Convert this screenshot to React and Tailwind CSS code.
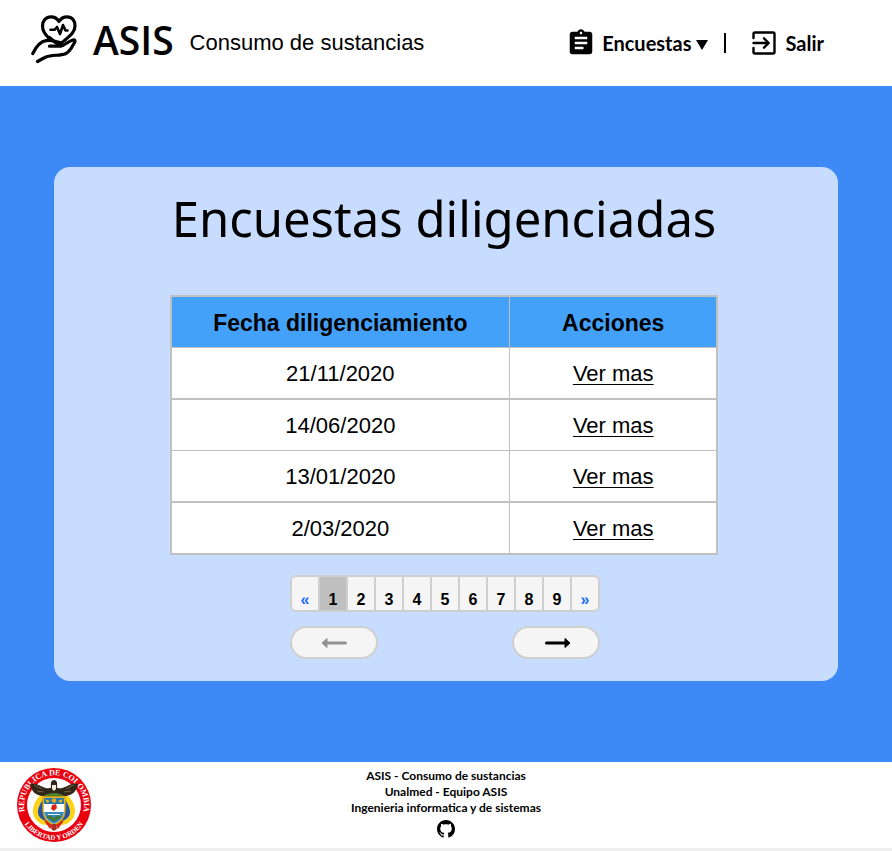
import React from "react";
import { MdAssignment } from "react-icons/md";

const surveys = ["21/11/2020", "14/06/2020", "13/01/2020", "2/03/2020"];
const pages = ["«", "1", "2", "3", "4", "5", "6", "7", "8", "9", "»"];

function HandHeartLogo() {
  return (
    <svg viewBox="0 0 46 50" className="h-[50px] w-[46px] shrink-0" fill="none" stroke="#000" strokeWidth="3.200" strokeLinecap="round" strokeLinejoin="round" aria-hidden="true">
      <path d="M18.5 24 C14 19 11.500 16 11.500 11 C11.500 5.500 15 1.800 20 1.800 C24 1.800 26.500 4 28 6.500 C29.500 4 32 1.800 36 1.800 C41 1.800 44 5.500 44 11 C44 18 38 21.500 31 27.500" />
      <path d="M18.500 22.500 L28 30.500" />
      <path d="M19.500 14.800 H23.500 L26 12 L29 19 L32 10 L34.500 15.500 H36.500" strokeWidth="2.600" />
      <path d="M1.800 38.500 C5 32 9 26.500 15 25.700 C20 25 25 26.300 29 27.500 C31 28.500 29.500 31.200 27.500 31.200 H18.500" />
      <path d="M29.500 31.200 C34 30.500 37 26 42 25 C44 24.700 44.500 26 43.500 27.500 C41 32 39 37 34.500 38.700 C29 41 21 39.500 15 42 C12 43.300 9.500 44.800 6.500 46.500" />
    </svg>
  );
}

function ExitIcon() {
  return (
    <svg viewBox="0 0 24 24" className="size-6 shrink-0" fill="none" stroke="#000" strokeWidth="2.400" strokeLinecap="round" strokeLinejoin="round" aria-hidden="true">
      <path d="M1.500 7 V3 Q1.500 1.500 3 1.500 H21 Q22.500 1.500 22.500 3 V21 Q22.500 22.500 21 22.500 H3 Q1.500 22.500 1.500 21 V17" />
      <path d="M1.500 12 H16 M12 7.300 L16.700 12 L12 16.700" />
    </svg>
  );
}

function Arrow({ left }) {
  return (
    <svg viewBox="0 0 26 12" className={left ? "h-3 w-[26px] text-[#929292]" : "h-3 w-[26px] text-black"} aria-hidden="true">
      <g transform={left ? "translate(26 0) scale(-1 1)" : undefined}>
        <path d="M1.500 6 H20" stroke="currentColor" strokeWidth="3" strokeLinecap="round" />
        <path d="M20 1.500 L25 6 L20 10.500 Z" fill="currentColor" stroke="currentColor" strokeLinejoin="round" />
      </g>
    </svg>
  );
}

function Emblem() {
  return (
    <svg viewBox="0 0 76 76" className="size-[76px] shrink-0" role="img" aria-label="República de Colombia">
      <defs>
        <path id="arc-top" d="M10 49 A30 30 0 1 1 66 49" />
        <path id="arc-bottom" d="M6 52 A35 35 0 0 0 70 52" />
      </defs>
      <circle cx="38" cy="38" r="37" fill="#e8000f" />
      <circle cx="38" cy="38" r="27" fill="#fff" />
      <g fill="#fff" fontFamily="'Liberation Serif', serif" fontWeight="700" fontSize="8">
        <text textAnchor="middle"><textPath href="#arc-top" startOffset="50%">REPUBLICA DE COLOMBIA</textPath></text>
        <text textAnchor="middle" fontSize="7"><textPath href="#arc-bottom" startOffset="50%">LIBERTAD Y ORDEN</textPath></text>
      </g>
      <path d="M25 28 C20 32 17 38 17 44 C17 51 22 57 30 58 L34 54 L30 28 Z M51 28 C56 32 59 38 59 44 C59 51 54 57 46 58 L42 54 L46 28 Z" fill="#ffd21a" />
      <path d="M27 32 C25 36 22 40 22 45 C22 50 26 53 32 55 L30 30 Z M49 32 C51 36 54 40 54 45 C54 50 50 53 44 55 L46 30 Z" fill="#2255ad" />
      <path d="M29 50 L37 57 L34 62 L29 55 Z M47 50 L39 57 L42 62 L47 55 Z" fill="#d92518" />
      <path d="M36 20 C29 25 22 14 14 17 C15 24 20 29 27 29 L34 28 L38 31 L42 28 L49 29 C56 29 61 24 62 17 C54 14 47 25 40 20 Z" fill="#302719" />
      <path d="M18 18 L26 22 M58 18 L50 22 M21 24 L28 25 M55 24 L48 25" stroke="#73613f" strokeWidth="1" />
      <path d="M35 20 Q34 13 38 13 Q42 13 41 20 L40 25 H36 Z" fill="#302719" />
      <path d="M36 18 H40 V22 L38 24 L36 22 Z" fill="#f1ead8" />
      <path d="M29 28 Q38 24 47 28 L46 32 H30 Z" fill="#50812c" />
      <path d="M27 30 H49 V44 Q48 54 38 58 Q28 54 27 44 Z" fill="#fff" stroke="#d8a000" strokeWidth="1.500" />
      <path d="M28 31 H48 V37 H28 Z" fill="#2377aa" />
      <path d="M28 45 H48 Q46 54 38 57 Q30 54 28 45 Z" fill="#378bc2" />
      <circle cx="38" cy="33.500" r="2.300" fill="#e7a824" />
      <path d="M29 32 L34 34 L31 36 Z M47 32 L42 34 L45 36 Z" fill="#e7b824" />
      <path d="M36 38 L40 37 L41 41 L38 44 L35 42 Z" fill="#d92518" />
      <path d="M30 50 L34 48 L38 51 L42 48 L46 50 L38 55 Z" fill="#42753a" />
      <path d="M32 47.500 H44" stroke="#e9f3ef" strokeWidth="1" />
      <path d="M36 57 H40 L41 62 L38 64 L35 62 Z" fill="#ae3020" />
    </svg>
  );
}

export default function App() {
  return (
    <div className="flex min-h-screen flex-col bg-[#eeeeee] font-['Liberation_Sans',Arial,sans-serif] text-black">
      <header className="flex h-[86px] items-center justify-between bg-white pr-[68px] pl-[31px]">
        <div className="flex items-center pb-1.5">
          <HandHeartLogo />
          <span className="ml-4 font-['Open_Sans',sans-serif] text-[39px] leading-[80px] font-semibold">ASIS</span>
          <span className="ml-4 pt-1 text-[22px]">Consumo de sustancias</span>
        </div>
        <nav className="flex items-center font-['Lato',sans-serif] text-[20px] leading-6 font-bold">
          <button type="button" className="flex items-center">
            <MdAssignment className="mr-1.5 size-[30px]" aria-hidden="true" />
            Encuestas
            <svg viewBox="0 0 12 10" className="mt-1 ml-1 h-2.5 w-3" aria-hidden="true"><path d="M0 0 H12 L6 10 Z" /></svg>
          </button>
          <span className="mx-4 h-5 w-0.5 bg-black" />
          <a href="#salir" className="ml-2.5 flex items-center gap-2.5"><ExitIcon />Salir</a>
        </nav>
      </header>

      <main className="flex flex-1 flex-col justify-center bg-[#3d8af7] px-[54px] py-20">
        <section className="flex flex-col items-center rounded-2xl bg-[#c8dcff] pt-4 pb-[22px]">
          <h1 className="mr-1 font-['Noto_Sans',sans-serif] text-[49px] leading-[70px]">Encuestas diligenciadas</h1>
          <table className="mt-[42px] mr-1 w-[70%] table-fixed border-collapse border-2 border-[#c0c0c0] bg-white text-center text-[22px] leading-[48px]">
            <thead>
              <tr className="bg-[#44a1fa]">
                <th className="w-[62%] border border-[#c0c0c0] px-0 pt-0.5 pb-0 text-[23px] font-bold">Fecha diligenciamiento</th>
                <th className="border border-[#c0c0c0] px-0 pt-0.5 pb-0 text-[23px] font-bold">Acciones</th>
              </tr>
            </thead>
            <tbody>
              {surveys.map((date, index) => (
                <tr key={date} className={index % 2 === 0 ? "border-b-2 border-[#c0c0c0]" : "border-b border-[#c0c0c0]"}>
                  <td className="border-x border-[#c0c0c0] px-0 pt-0.5 pb-0">{date}</td>
                  <td className="border-x border-[#c0c0c0] px-0 pt-0.5 pb-0"><a href="#ver" className="underline decoration-1 underline-offset-3">Ver mas</a></td>
                </tr>
              ))}
            </tbody>
          </table>
          <div className="mt-5 mr-0.5 w-[310px]">
            <div className="flex divide-x-2 divide-[#cfcfcf] overflow-hidden rounded-md border-2 border-[#cfcfcf] bg-[#f5f5f5]">
              {pages.map((page) => (
                <button
                  type="button"
                  key={page}
                  className={
                    page === "1"
                      ? "h-[33px] flex-1 bg-[#bfbfbf] pt-3 text-base leading-[21px] font-bold"
                      : page === "«" || page === "»"
                        ? "h-[33px] flex-1 pt-3 text-base leading-[21px] font-bold text-[#1668ff]"
                        : "h-[33px] flex-1 pt-3 text-base leading-[21px] font-bold"
                  }
                >
                  {page}
                </button>
              ))}
            </div>
            <div className="mt-3.5 flex justify-between">
              <button type="button" disabled aria-label="Anterior" className="flex h-[33px] w-[88px] items-center justify-center rounded-full border-2 border-[#cfcfcf] bg-[#f5f5f5]"><Arrow left /></button>
              <button type="button" aria-label="Siguiente" className="flex h-[33px] w-[88px] items-center justify-center rounded-full border-2 border-[#cfcfcf] bg-[#f5f5f5] pl-1"><Arrow /></button>
            </div>
          </div>
        </section>
      </main>

      <footer className="mb-[3px] grid h-[86px] grid-cols-[1fr_auto_1fr] items-center bg-white px-4">
        <Emblem />
        <div className="flex flex-col items-center pb-1 text-center font-['Lato',sans-serif] text-[12px] leading-4 font-bold">
          <p>ASIS - Consumo de sustancias</p>
          <p>Unalmed - Equipo ASIS</p>
          <p>Ingenieria informatica y de sistemas</p>
          <a href="#github" aria-label="GitHub" className="mt-1">
            <svg viewBox="0 0 16 16" className="size-[18px]" aria-hidden="true">
              <path d="M8 0C3.580 0 0 3.580 0 8c0 3.540 2.290 6.530 5.470 7.590.4.070.55-.17.55-.38 0-.19-.01-.82-.01-1.490-2.010.37-2.530-.49-2.690-.94-.09-.23-.48-.94-.82-1.130-.28-.15-.68-.52-.01-.53.63-.01 1.080.58 1.230.82.72 1.210 1.870.87 2.330.66.07-.52.28-.87.51-1.070-1.780-.2-3.640-.89-3.640-3.950 0-.87.31-1.590.82-2.150-.08-.2-.36-1.020.08-2.120 0 0 .67-.21 2.200.82.64-.18 1.320-.27 2-.27s1.360.09 2 .27c1.530-1.040 2.200-.82 2.200-.82.44 1.100.16 1.920.08 2.120.51.56.82 1.270.82 2.150 0 3.070-1.870 3.750-3.650 3.950.29.25.54.73.54 1.480 0 1.070-.01 1.930-.01 2.200 0 .21.15.46.55.38A8.010 8.010 0 0 0 16 8c0-4.420-3.580-8-8-8Z" />
            </svg>
          </a>
        </div>
        <div />
      </footer>
    </div>
  );
}
